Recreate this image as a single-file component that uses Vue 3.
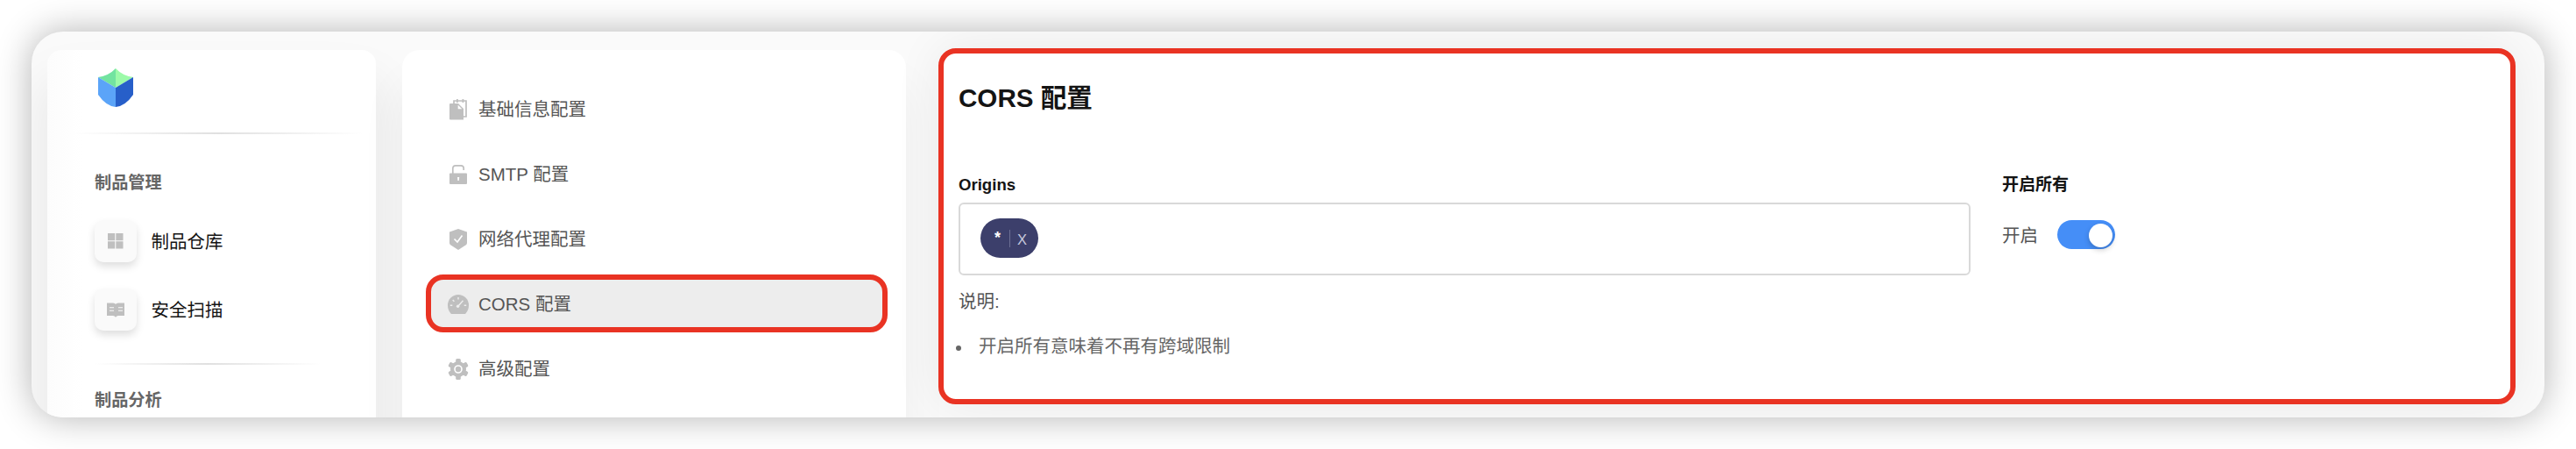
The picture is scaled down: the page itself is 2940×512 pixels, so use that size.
<script setup>
const menu = [
  { label: '基础信息配置', icon: 'files' },
  { label: 'SMTP 配置', icon: 'lock' },
  { label: '网络代理配置', icon: 'shield' },
  { label: 'CORS 配置', icon: 'gauge', active: true },
  { label: '高级配置', icon: 'gear' }
]
const teeth = [0, 60, 120, 180, 240, 300]
</script>

<template>
  <div class="window">
    <aside class="sidebar">
      <div class="brand">
        <svg class="logo" width="40" height="44" viewBox="0 0 40 44">
          <path d="M20 0Q12 8.500 0 10L20 22Z" fill="#72e3a0" />
          <path d="M20 0Q28 8.500 40 10L20 22Z" fill="#9cfaa9" />
          <path d="M0 10L20 22V44Q9 43 0 30Z" fill="#5ba4f8" />
          <path d="M40 10L20 22V44Q31 43 40 30Z" fill="#275fc9" />
        </svg>
      </div>
      <div class="rule rule-top"></div>
      <div class="group">制品管理</div>
      <div class="nav">
        <span class="nav-icon">
          <svg width="18" height="18" viewBox="0 0 18 18" fill="#bfbfbf">
            <path d="M0 0h8.200v8.200H0zM9.300 0h8.200v8.200H9.300zM0 9.300h8.200v8.200H0zM9.300 9.300h8.200v8.200H9.300z" />
          </svg>
        </span>
        <span>制品仓库</span>
      </div>
      <div class="nav nav-last">
        <span class="nav-icon">
          <svg width="20" height="17" viewBox="0 0 20 17">
            <path d="M0 .5H7Q9.500.7 10 2Q10.500.7 13 .5H20V15H13Q11 15 10 16.800Q9 15 7 15H0Z" fill="#bfbfbf" />
            <path d="M3 5.800h5M3 9.300h5M13 5.800h5M13 9.300h5" stroke="#fafafa" stroke-width="1.100" />
          </svg>
        </span>
        <span>安全扫描</span>
      </div>
      <div class="rule rule-group"></div>
      <div class="group group-second">制品分析</div>
    </aside>

    <nav class="settings">
      <div v-for="m in menu" :key="m.label" class="item" :class="{ active: m.active }">
        <svg class="item-icon" width="24" height="24" viewBox="0 0 24 24" fill="#bfbfbf">
          <template v-if="m.icon === 'files'">
            <path d="M7 5V2H21V20H18" fill="none" stroke="#bfbfbf" stroke-width="1.700" />
            <path d="M10 0h1.800v4H10zM16.500 0h1.800v4h-1.800z" />
            <path d="M3 5H12L18 11V23.500H3Q2 23.500 2 22.500V6Q2 5 3 5Z" />
            <path d="M11.700 6.700V11.300H16.300Z" fill="#fff" />
          </template>
          <template v-else-if="m.icon === 'lock'">
            <path d="M5.800 11V5.500Q5.800 1.900 9 1.900H15Q18.200 1.900 18.200 5V7" fill="none" stroke="#bfbfbf" stroke-width="1.700" />
            <path d="M3 10.500H21Q22 10.500 22 11.500V22Q22 23 21 23H3Q2 23 2 22V11.500Q2 10.500 3 10.500Z" />
            <path d="M11 15h2.200l-.4 4h-1.400z" fill="#fff" />
          </template>
          <template v-else-if="m.icon === 'shield'">
            <path d="M12 0L22 3.500V16Q22 17.500 20.500 18.600L12 24L3.500 18.600Q2 17.500 2 16V3.500Z" />
            <path d="M7.500 11.500L11 15L16.500 7.500" fill="none" stroke="#fff" stroke-width="1.700" />
          </template>
          <template v-else-if="m.icon === 'gauge'">
            <path d="M12 1A12 12 0 0 1 24 13Q24 18.500 20.500 22.500Q20 23 19 23H5Q4 23 3.500 22.500Q0 18.500 0 13A12 12 0 0 1 12 1Z" />
            <path d="M12 4v2.600M5.700 7l1.700 1.700M2.800 13.300h2.500M18.700 13.300h2.500M17.500 7.700L12 14" stroke="#eee" stroke-width="1.400" fill="none" />
            <circle cx="11.600" cy="14.200" r="1.700" fill="#eee" />
          </template>
          <template v-else>
            <circle cx="12" cy="12" r="9" />
            <rect v-for="t in teeth" :key="t" x="9.200" y="0" width="5.600" height="6" rx="1.500" :transform="`rotate(${t} 12 12)`" />
            <circle cx="12" cy="12" r="4" fill="none" stroke="#fff" stroke-width="1.600" />
          </template>
        </svg>
        <span>{{ m.label }}</span>
      </div>
    </nav>

    <main class="panel">
      <h1>CORS 配置</h1>
      <div class="form">
        <section class="origins">
          <div class="label">Origins</div>
          <div class="field">
            <span class="tag"><b>*</b><i></i><span class="close">X</span></span>
          </div>
          <p class="note">说明:</p>
          <div class="hint"><span class="dot"></span><span>开启所有意味着不再有跨域限制</span></div>
        </section>
        <section>
          <div class="label">开启所有</div>
          <div class="toggle-row">
            <span>开启</span>
            <span class="switch"><span class="knob"></span></span>
          </div>
        </section>
      </div>
    </main>
  </div>
</template>

<style>
body {
  margin: 0;
  background: #fff;
}
</style>

<style scoped>
* {
  box-sizing: border-box;
}
.window {
  display: flex;
  align-items: flex-start;
  width: 2868px;
  height: 440px;
  margin: 36px;
  padding: 19px 0 0 18px;
  overflow: hidden;
  border-radius: 36px;
  background: #fafafa;
  box-shadow: 0 0 40px rgba(0, 0, 0, 0.3);
  font-family: "Liberation Sans", "Noto Sans CJK SC", sans-serif;
  font-size: 20.5px;
  color: #555;
  white-space: nowrap;
}
.sidebar {
  flex: none;
  width: 375px;
  height: 520px;
  margin-top: 2px;
  padding: 21px 0 0 54px;
  border-radius: 16px;
  background: linear-gradient(90deg, #fcfcfc, #fff 40px);
  box-shadow: 0 40px 54px 8px rgba(0, 0, 0, 0.07);
}
.brand {
  height: 73px;
  padding-left: 4px;
}
.logo {
  display: block;
}
.rule {
  height: 2px;
  background: linear-gradient(90deg, transparent, #e0e0e0, transparent);
}
.rule-top {
  width: 330px;
  margin-left: -24px;
}
.group {
  height: 28px;
  margin-top: 42px;
  line-height: 28px;
  font-size: 19.2px;
  font-weight: 700;
  color: #666;
}
.nav {
  display: flex;
  align-items: center;
  gap: 16.5px;
  height: 48px;
  margin-top: 28px;
  line-height: 28px;
  color: #141414;
}
.nav > span:last-child {
  padding-top: 1px;
}
.nav-last {
  margin-top: 30px;
}
.nav-icon {
  display: flex;
  align-items: center;
  justify-content: center;
  width: 48px;
  height: 48px;
  border-radius: 10px;
  background: #fafafa;
  box-shadow: 0 5px 10px rgba(0, 0, 0, 0.13);
}
.rule-group {
  width: 258px;
  margin-top: 37px;
}
.group-second {
  margin-top: 27px;
}
.settings {
  flex: none;
  width: 575px;
  height: 520px;
  margin: 2px 0 0 30px;
  padding: 34px 21px 0 27px;
  border-radius: 20px;
  background: #fff;
  box-shadow: 0 40px 54px rgba(0, 0, 0, 0.05);
}
.item {
  display: flex;
  align-items: center;
  gap: 11px;
  height: 66px;
  margin-bottom: 8px;
  padding: 2px 0 0 25px;
  line-height: 28px;
}
.active {
  padding-left: 19px;
  border: 6px solid #e93323;
  border-radius: 20px;
  background: #ededed;
}
.panel {
  flex: none;
  width: 1800px;
  height: 406px;
  margin-left: 37px;
  padding: 30px 17px 0;
  border: 6px solid #e93323;
  border-radius: 20px;
  background: #fff;
  box-shadow: 0 0 54px 0 rgba(0, 0, 0, 0.07);
}
h1 {
  height: 40px;
  margin: 0;
  line-height: 41px;
  font-size: 29.6px;
  font-weight: 700;
  color: #141414;
}
.form {
  display: flex;
  gap: 36px;
  margin-top: 65px;
}
.origins {
  width: 1155px;
}
.label {
  height: 28px;
  line-height: 30px;
  font-size: 19px;
  font-weight: 700;
  color: #141414;
}
.origins .label {
  font-size: 18.6px;
}
.field {
  height: 83px;
  margin-top: 7px;
  padding: 16px 23px;
  border: 2px solid #d9d9d9;
  border-radius: 6px;
}
.tag {
  display: flex;
  align-items: center;
  width: 66px;
  height: 45px;
  padding-left: 16px;
  border-radius: 23px;
  background: #3c3f6b;
  color: #fff;
}
.tag b {
  width: 17px;
  font-size: 18px;
}
.tag i {
  width: 1px;
  height: 20px;
  background: #6c6f94;
}
.close {
  margin-left: 8px;
  padding-top: 2px;
  line-height: 20px;
  font-size: 16.5px;
  color: #c6c8dc;
}
.note {
  height: 28px;
  margin: 16px 0 0;
  line-height: 28px;
}
.hint {
  display: flex;
  align-items: center;
  height: 28px;
  margin: 23px 0 0 -3px;
  line-height: 28px;
  color: #666;
}
.dot {
  width: 6px;
  height: 6px;
  margin: 4px 20px 0 0;
  border-radius: 50%;
  background: #666;
}
.toggle-row {
  display: flex;
  align-items: center;
  gap: 22px;
  height: 34px;
  margin-top: 26px;
}
.switch {
  display: flex;
  justify-content: flex-end;
  width: 66px;
  height: 33px;
  padding: 4px 3px;
  border-radius: 17px;
  background: #458ef7;
}
.knob {
  width: 27px;
  height: 27px;
  border-radius: 50%;
  background: #fff;
  box-shadow: 0 3px 6px rgba(0, 0, 0, 0.2);
}
</style>
